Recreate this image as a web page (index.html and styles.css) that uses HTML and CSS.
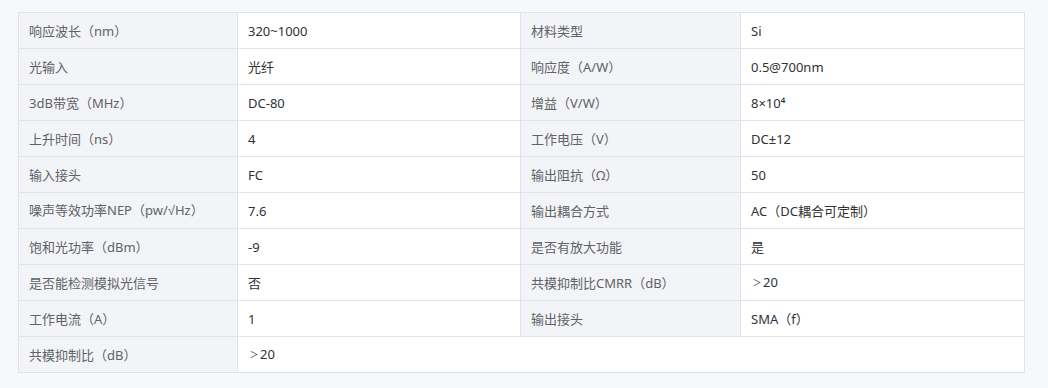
FILE: index.html
```html
<!DOCTYPE html>
<html lang="zh-CN">
<head>
<meta charset="utf-8">
<title>参数</title>
<link rel="stylesheet" href="styles.css">
</head>
<body>
<table class="specs">
  <colgroup>
    <col class="c-label">
    <col class="c-value">
    <col class="c-label2">
    <col class="c-value2">
  </colgroup>
  <tbody>
    <tr><td class="label">响应波长（nm）</td><td class="value">320~1000</td><td class="label">材料类型</td><td class="value">Si</td></tr>
    <tr><td class="label">光输入</td><td class="value">光纤</td><td class="label">响应度（A/W）</td><td class="value">0.5@700nm</td></tr>
    <tr><td class="label">3dB带宽（MHz）</td><td class="value">DC-80</td><td class="label">增益（V/W）</td><td class="value">8×10⁴</td></tr>
    <tr><td class="label">上升时间（ns）</td><td class="value">4</td><td class="label">工作电压（V）</td><td class="value">DC±12</td></tr>
    <tr><td class="label">输入接头</td><td class="value">FC</td><td class="label">输出阻抗（Ω）</td><td class="value">50</td></tr>
    <tr><td class="label">噪声等效功率NEP（pw/<span class="sym">√</span>Hz）</td><td class="value">7.6</td><td class="label">输出耦合方式</td><td class="value">AC（DC耦合可定制）</td></tr>
    <tr><td class="label">饱和光功率（dBm）</td><td class="value">-9</td><td class="label">是否有放大功能</td><td class="value">是</td></tr>
    <tr><td class="label">是否能检测模拟光信号</td><td class="value">否</td><td class="label">共模抑制比CMRR（dB）</td><td class="value"><span class="gt">＞</span>20</td></tr>
    <tr><td class="label">工作电流（A）</td><td class="value">1</td><td class="label">输出接头</td><td class="value">SMA（f）</td></tr>
    <tr><td class="label">共模抑制比（dB）</td><td class="value" colspan="3"><span class="gt">＞</span>20</td></tr>
  </tbody>
</table>
</body>
</html>
```
FILE: styles.css
```css
html, body {
  margin: 0;
  padding: 0;
  background: #f7f8fa;
}
body {
  padding: 12px 18px;
  font-family: "Noto Sans", "Noto Sans CJK SC", sans-serif;
  font-size: 13px;
}
.specs {
  width: 1006px;
  border-collapse: collapse;
  table-layout: fixed;
  background: #ffffff;
}
.c-label { width: 219px; }
.c-value { width: 283px; }
.c-label2 { width: 220px; }
.c-value2 { width: 284px; }
.specs td {
  border: 1px solid #dfe2e8;
  height: 36px;
  padding: 0 10px;
  box-sizing: border-box;
  line-height: 20px;
  vertical-align: middle;
  white-space: nowrap;
}
.specs td.label {
  background: #f3f4f7;
  color: #606266;
}
.specs td.value {
  background: #ffffff;
  color: #303133;
}
.sym {
  font-family: "Liberation Sans", sans-serif;
}
.gt {
  display: inline-block;
  font-family: "Liberation Sans", "Noto Sans CJK SC", sans-serif;
  font-size: 9px;
  width: 12px;
  text-align: center;
  vertical-align: 1px;
}
```
